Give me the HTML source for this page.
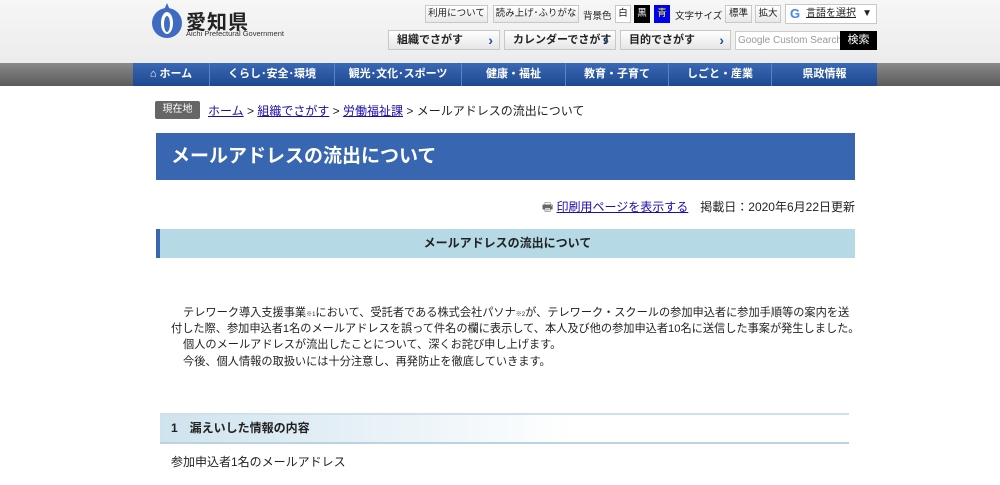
<!DOCTYPE html>
<html><head><meta charset="utf-8"><style>
*{margin:0;padding:0;box-sizing:border-box}
body{width:1000px;height:485px;overflow:hidden;background:#fff;font-family:"Liberation Sans","Noto Sans CJK JP",sans-serif;font-size:12px;color:#222;position:relative}
.a{position:absolute;white-space:nowrap}
.hdr{left:0;top:0;width:1000px;height:63px;background:linear-gradient(#f6f6f6,#ececec)}
.btn{position:absolute;white-space:nowrap;overflow:hidden;height:18px;border:1px solid #c8c8c8;background:linear-gradient(#fff,#e8e8e8);font-size:9.5px;line-height:16px;text-align:center;color:#222}
.b2{position:absolute;white-space:nowrap;height:20px;border:1px solid #c8c8c8;background:linear-gradient(#fff,#e6e6e6);font-size:11px;line-height:18px;padding-left:8px;color:#222;font-weight:bold}
.b2 span{position:absolute;right:6px;top:0;color:#1d4f9c;font-size:14px;font-weight:bold}
.navbg{left:0;top:63px;width:1000px;height:23px;background:linear-gradient(#8a8a8a,#5a5a5a)}
.nav{left:133px;top:63px;width:744px;height:23px;background:linear-gradient(#3b69b5,#1e4790);display:flex}
.nav div{color:#fff;font-size:11px;font-weight:bold;text-align:center;line-height:23px;border-right:1px solid #5b82c0;white-space:nowrap}
a{color:#1a0dab;text-decoration:underline}
.p{position:absolute;white-space:nowrap;font-size:11.2px;line-height:17px}
</style></head><body>
<div class="a hdr"></div>
<svg class="a" style="left:150px;top:1px" width="34" height="38" viewBox="0 0 34 38"><circle cx="17" cy="22" r="15" fill="#3f6cc0"/><path d="M17 2 L20 9 L17 8 L14 9Z" fill="#3f6cc0"/><ellipse cx="17" cy="22" rx="6" ry="11" fill="#fff"/><ellipse cx="17" cy="23" rx="3" ry="8" fill="#3f6cc0"/></svg>
<div class="a" style="left:186px;top:6px;font-size:20px;font-weight:bold;color:#222;letter-spacing:1px">愛知県</div>
<div class="a" style="left:186px;top:29px;font-size:7.5px;color:#333">Aichi Prefectural Government</div>
<div class="btn" style="left:425px;top:5px;width:63px">利用について</div>
<div class="btn" style="left:493px;top:5px;width:86px">読み上げ･ふりがな</div>
<div class="a" style="left:583px;top:8px;font-size:9.5px">背景色</div>
<div class="btn" style="left:615px;top:5px;width:16px;background:#fff">白</div>
<div class="btn" style="left:634px;top:5px;width:16px;background:#000;color:#fff;border-color:#000">黒</div>
<div class="btn" style="left:654px;top:5px;width:16px;background:#0000ee;color:#ff0;border-color:#00e">青</div>
<div class="a" style="left:675px;top:8px;font-size:9.5px">文字サイズ</div>
<div class="btn" style="left:725px;top:5px;width:27px">標準</div>
<div class="btn" style="left:755px;top:5px;width:26px">拡大</div>
<div class="btn" style="left:785px;top:4px;width:92px;height:20px;background:#fff;text-align:left;padding-left:20px;line-height:18px;font-size:10px"><b class="a" style="left:4px;top:0;color:#4285f4;font-size:13px">G</b><span style="text-decoration:underline">言語を選択</span><span class="a" style="right:4px;top:0">▼</span></div>
<div class="b2" style="left:388px;top:30px;width:112px">組織でさがす<span>›</span></div>
<div class="b2" style="left:504px;top:30px;width:112px">カレンダーでさがす<span>›</span></div>
<div class="b2" style="left:620px;top:30px;width:111px">目的でさがす<span>›</span></div>
<div class="a" style="left:735px;top:31px;width:106px;height:19px;background:#fff;border:1px solid #ccc;font-size:10px;color:#999;line-height:17px;padding-left:2px;overflow:hidden">Google Custom Search</div>
<div class="a" style="left:840px;top:31px;width:37px;height:19px;background:#000;color:#fff;font-size:11px;line-height:19px;text-align:center">検索</div>
<div class="a navbg"></div>
<div class="a nav">
<div style="width:77px">⌂ ホーム</div><div style="width:125px">くらし･安全･環境</div><div style="width:127px">観光･文化･スポーツ</div><div style="width:104px">健康・福祉</div><div style="width:103px">教育・子育て</div><div style="width:103px">しごと・産業</div><div style="width:105px;border:0">県政情報</div></div>
<div class="a" style="left:155px;top:101px;width:45px;height:18px;background:#666;color:#fff;font-size:10px;line-height:18px;text-align:center;border-radius:2px">現在地</div>
<div class="a" style="left:208px;top:102px;font-size:12px"><a>ホーム</a> &gt; <a>組織でさがす</a> &gt; <a>労働福祉課</a> &gt; メールアドレスの流出について</div>
<div class="a" style="left:156px;top:133px;width:699px;height:47px;background:#3866b0;color:#fff;font-size:19px;font-weight:bold;line-height:47px;padding-left:15px">メールアドレスの流出について</div>
<div class="a" style="right:145px;top:198px;font-size:12px"><span style="color:#666">🖶</span> <a>印刷用ページを表示する</a>　掲載日：2020年6月22日更新</div>
<div class="a" style="left:156px;top:229px;width:699px;height:29px;background:#b5d9e5;border-left:4px solid #3866b0;font-weight:bold;text-align:center;line-height:29px;font-size:12px">メールアドレスの流出について</div>
<div class="p" style="left:183px;top:305px">テレワーク導入支援事業<span style="font-size:6px">※1</span>において、受託者である株式会社パソナ<span style="font-size:6px">※2</span>が、テレワーク・スクールの参加申込者に参加手順等の案内を送</div>
<div class="p" style="left:171px;top:321px">付した際、参加申込者1名のメールアドレスを誤って件名の欄に表示して、本人及び他の参加申込者10名に送信した事案が発生しました。</div>
<div class="p" style="left:183px;top:337px">個人のメールアドレスが流出したことについて、深くお詫び申し上げます。</div>
<div class="p" style="left:183px;top:354px">今後、個人情報の取扱いには十分注意し、再発防止を徹底していきます。</div>
<div class="a" style="left:160px;top:413px;width:689px;height:31px;background:linear-gradient(90deg,#cfe3ee,#fff 60%);border-top:2px solid #cfe0ea;border-bottom:2px solid #b9d3e2;font-weight:bold;line-height:27px;padding-left:11px">1　漏えいした情報の内容</div>
<div class="a" style="left:171px;top:453px">参加申込者1名のメールアドレス</div>
</body></html>
